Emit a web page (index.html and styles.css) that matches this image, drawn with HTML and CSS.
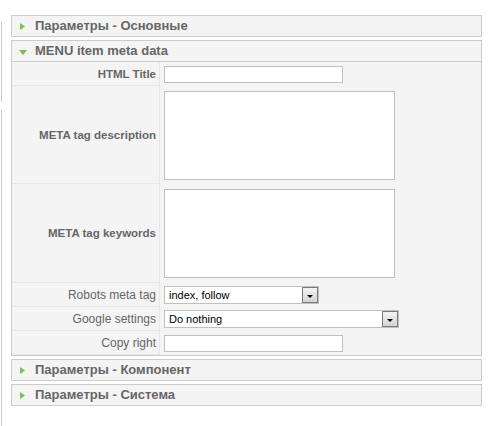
FILE: index.html
```html
<!DOCTYPE html>
<html lang="ru">

<head>
    <meta charset="UTF-8">
    <title>Menu item</title>
    <link rel="stylesheet" href="styles.css">
</head>

<body>
    <div class="page">
        <div class="edge">
            <span class="edge-top"></span>
            <span class="edge-bottom"></span>
        </div>

        <div class="pane-sliders">
            <div class="panel">
                <h3 class="title">
                    <svg class="arrow-right" width="5" height="7" viewBox="0 0 5 7"><path d="M0 0L5 3.5L0 7Z" /></svg>
                    <span>Параметры - Основные</span>
                </h3>
            </div>

            <div class="panel">
                <h3 class="title open">
                    <svg class="arrow-down" width="8" height="5" viewBox="0 0 8 5"><path d="M0 0H8L4 5Z" /></svg>
                    <span>MENU item meta data</span>
                </h3>
                <div class="params">
                    <div class="key bold">HTML Title</div>
                    <div class="value"><input class="text" type="text"></div>

                    <div class="key bold">META tag description</div>
                    <div class="value"><textarea class="area"></textarea></div>

                    <div class="key bold">META tag keywords</div>
                    <div class="value"><textarea class="area"></textarea></div>

                    <div class="key">Robots meta tag</div>
                    <div class="value">
                        <div class="select robots">
                            <span class="select-text">index, follow</span>
                            <span class="select-btn"><span class="caret"></span></span>
                        </div>
                    </div>

                    <div class="key">Google settings</div>
                    <div class="value">
                        <div class="select google">
                            <span class="select-text">Do nothing</span>
                            <span class="select-btn"><span class="caret"></span></span>
                        </div>
                    </div>

                    <div class="key">Copy right</div>
                    <div class="value"><input class="text" type="text"></div>
                </div>
            </div>

            <div class="panel">
                <h3 class="title">
                    <svg class="arrow-right" width="5" height="7" viewBox="0 0 5 7"><path d="M0 0L5 3.5L0 7Z" /></svg>
                    <span>Параметры - Компонент</span>
                </h3>
            </div>

            <div class="panel">
                <h3 class="title">
                    <svg class="arrow-right" width="5" height="7" viewBox="0 0 5 7"><path d="M0 0L5 3.5L0 7Z" /></svg>
                    <span>Параметры - Система</span>
                </h3>
            </div>
        </div>
    </div>
</body>

</html>
```

FILE: styles.css
```css
* {
    box-sizing: border-box;
}

body {
    margin: 0;
    background-color: #ffffff;
    font-family: "Liberation Sans", Arial, sans-serif;
}

.page {
    display: flex;
    min-height: 100vh;
}

/* left edge of the outer frame */
.edge {
    width: 1px;
    margin-left: 1px;
    display: flex;
    flex-direction: column;
}

.edge-top {
    display: block;
    height: 80px;
    margin-top: 22px;
    background-color: #c8c8c8;
}

.edge-bottom {
    display: block;
    flex: 1;
    margin-top: 8px;
    background-color: #c8c8c8;
}

.pane-sliders {
    width: 471px;
    margin-left: 9px;
    padding-top: 15px;
}

.panel {
    border: 1px solid #cccccc;
    background-color: #f4f4f4;
    margin-bottom: 3px;
}

.title {
    margin: 0;
    height: 20px;
    display: flex;
    align-items: center;
    font-size: 13px;
    line-height: 20px;
    font-weight: bold;
    color: #666666;
}

.title.open {
    height: 21px;
    border-bottom: 1px solid #cccccc;
}

.arrow-right {
    margin-left: 8px;
    margin-right: 10px;
    fill: #7fbf4a;
}

.arrow-down {
    margin-left: 7px;
    margin-right: 8px;
    margin-top: 2px;
    fill: #7fbf4a;
}

.params {
    display: grid;
    grid-template-columns: 148px 1fr;
    grid-template-rows: 24px 98px 99px 24px 24px 24px;
}

.key {
    display: flex;
    align-items: center;
    justify-content: flex-end;
    padding-right: 3px;
    border-right: 1px solid #e6e6e6;
    border-bottom: 1px solid #e6e6e6;
    font-size: 12px;
    color: #666666;
}

.key.bold {
    font-size: 11.5px;
    font-weight: bold;
}

.value {
    display: flex;
    align-items: center;
    padding-left: 4px;
}

.text {
    width: 179px;
    height: 17px;
    margin: 0;
    border: 1px solid #c0c0c0;
    background-color: #ffffff;
}

.area {
    width: 231px;
    height: 89px;
    margin: 0;
    border: 1px solid #c0c0c0;
    background-color: #ffffff;
    resize: none;
}

.select {
    height: 18px;
    display: flex;
    align-items: center;
    border: 1px solid #c0c0c0;
    background-color: #ffffff;
    font-size: 11px;
    color: #000000;
}

.select.robots {
    width: 155px;
}

.select.google {
    width: 235px;
}

.select-text {
    flex: 1;
    padding-left: 4px;
}

.select-btn {
    width: 16px;
    height: 16px;
    display: flex;
    justify-content: center;
    align-items: flex-end;
    padding-bottom: 4px;
    border: 1px solid #7b7b7b;
    background: linear-gradient(#f4f4f4, #d4d4d4);
}

.caret {
    width: 0;
    height: 0;
    border-left: 3px solid transparent;
    border-right: 3px solid transparent;
    border-top: 3px solid #000000;
}
```
